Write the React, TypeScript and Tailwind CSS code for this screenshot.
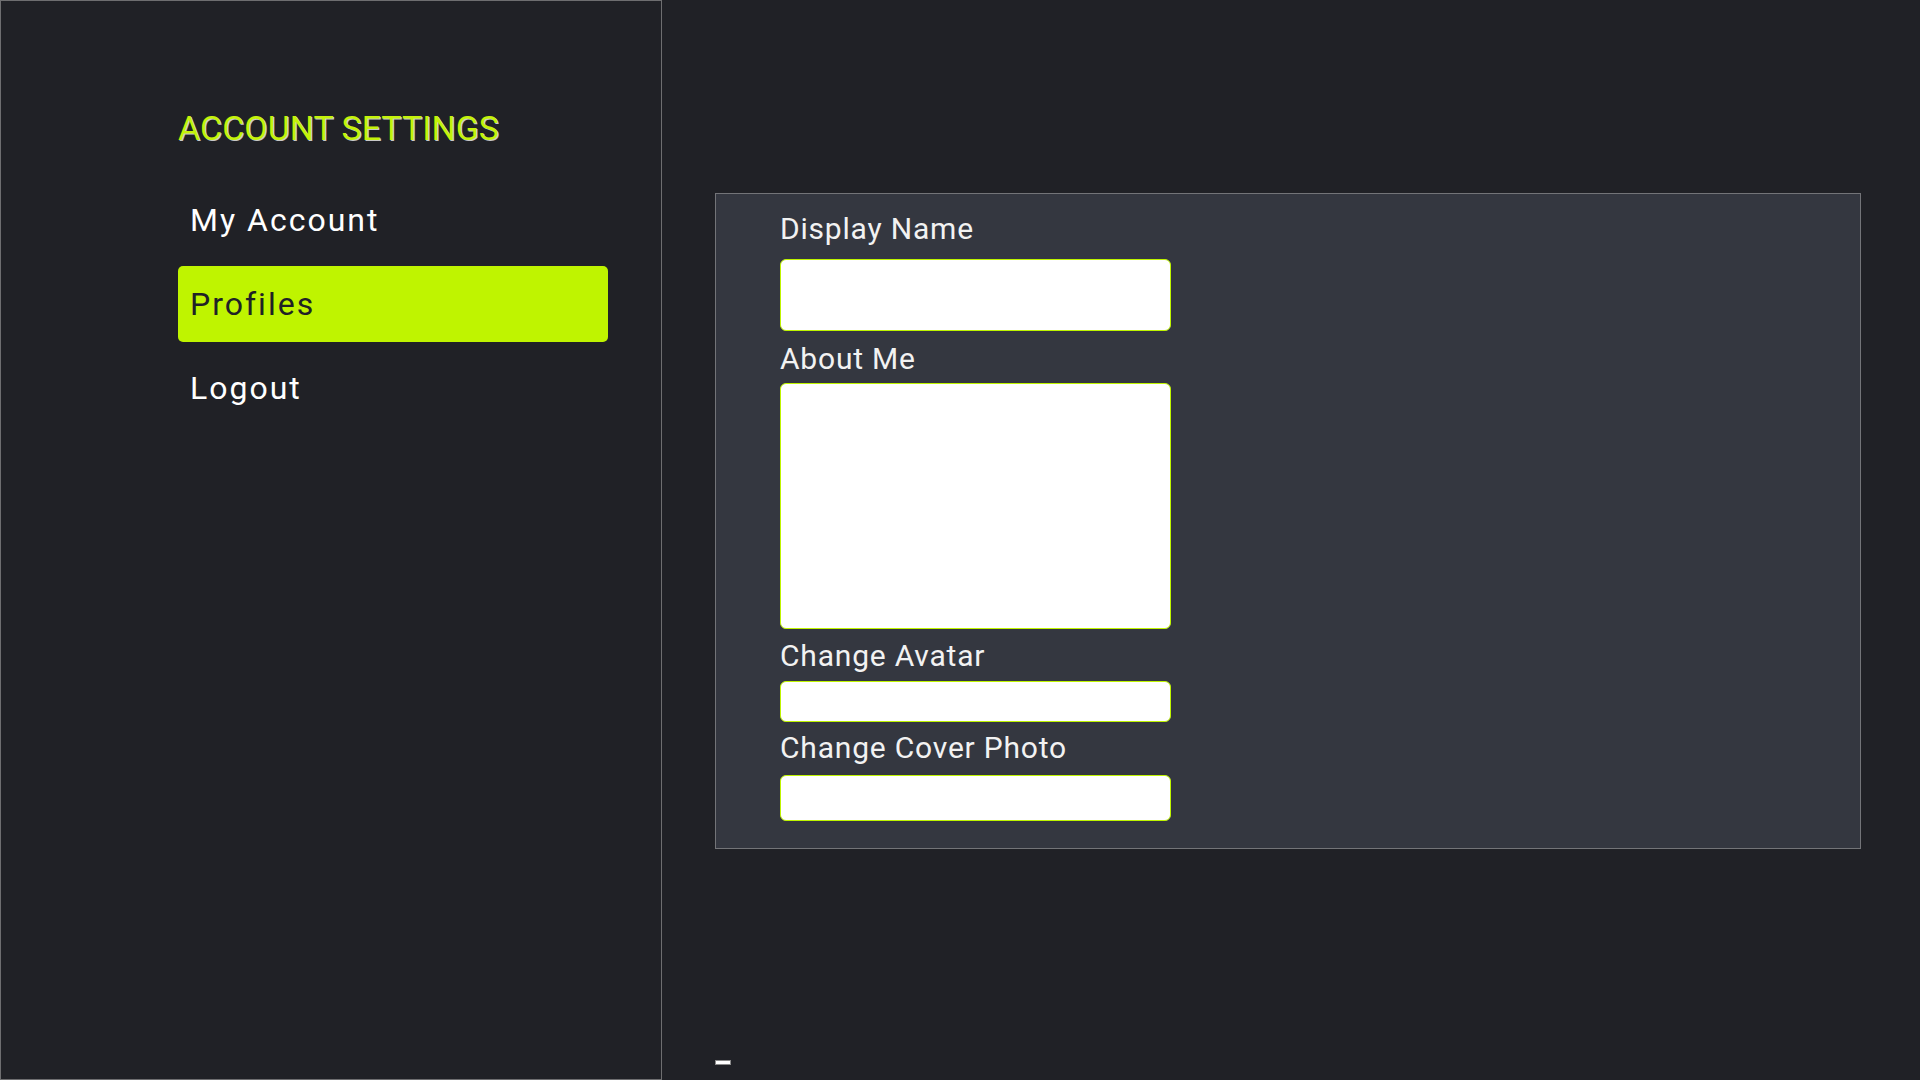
import { useState } from 'react';

const navItems = ['My Account', 'Profiles', 'Logout'];

export default function App() {
  const [active, setActive] = useState('Profiles');

  return (
    <div className="flex w-[1920px] h-[1080px] bg-[#202126] font-['Roboto',sans-serif] overflow-hidden">
      <aside className="w-[662px] h-[1080px] shrink-0 border border-[#6e6e70] pt-[110px] pl-[177px]">
        <h1 className="text-[34px] leading-[34px] text-[#c4f20a] [text-shadow:1px_1px_0_#c8c8c8]">ACCOUNT SETTINGS</h1>
        <nav className="mt-[37px] flex flex-col gap-[8px] w-[430px]">
          {navItems.map((item) => (
            <button
              key={item}
              onClick={() => setActive(item)}
              className={
                item === active
                  ? 'h-[76px] px-[12px] text-left text-[32px] tracking-[2px] leading-[74px] rounded-[5px] bg-[#bff400] text-[#202126]'
                  : 'h-[76px] px-[12px] text-left text-[32px] tracking-[2px] leading-[74px] rounded-[5px] text-white'
              }
            >
              {item}
            </button>
          ))}
        </nav>
      </aside>

      <main className="flex flex-col pl-[53px] pt-[193px]">
        <section className="w-[1146px] h-[656px] border border-[#737478] bg-[#343740] pt-[20px] pl-[64px] flex flex-col">
          <label className="text-[30px] leading-[30px] tracking-[0.8px] text-[#f2f2f2]">Display Name</label>
          <input className="mt-[15px] w-[391px] h-[72px] bg-white rounded-[6px] border border-[#bff400] outline-none" />
          <label className="mt-[13px] text-[30px] leading-[30px] tracking-[0.8px] text-[#f2f2f2]">About Me</label>
          <textarea className="mt-[9px] w-[391px] h-[246px] bg-white rounded-[6px] border border-[#bff400] outline-none resize-none" />
          <label className="mt-[12px] text-[30px] leading-[30px] tracking-[0.8px] text-[#f2f2f2]">Change Avatar</label>
          <input className="mt-[10px] w-[391px] h-[41px] bg-white rounded-[6px] border border-[#bff400] outline-none" />
          <label className="mt-[11px] text-[30px] leading-[30px] tracking-[0.8px] text-[#f2f2f2]">Change Cover Photo</label>
          <input className="mt-[12px] w-[391px] h-[46px] bg-white rounded-[6px] border border-[#bff400] outline-none" />
        </section>
        <div className="mt-[211px] w-[16px] h-[5px] bg-white border border-[#8a8a8a]" />
      </main>
    </div>
  );
}
